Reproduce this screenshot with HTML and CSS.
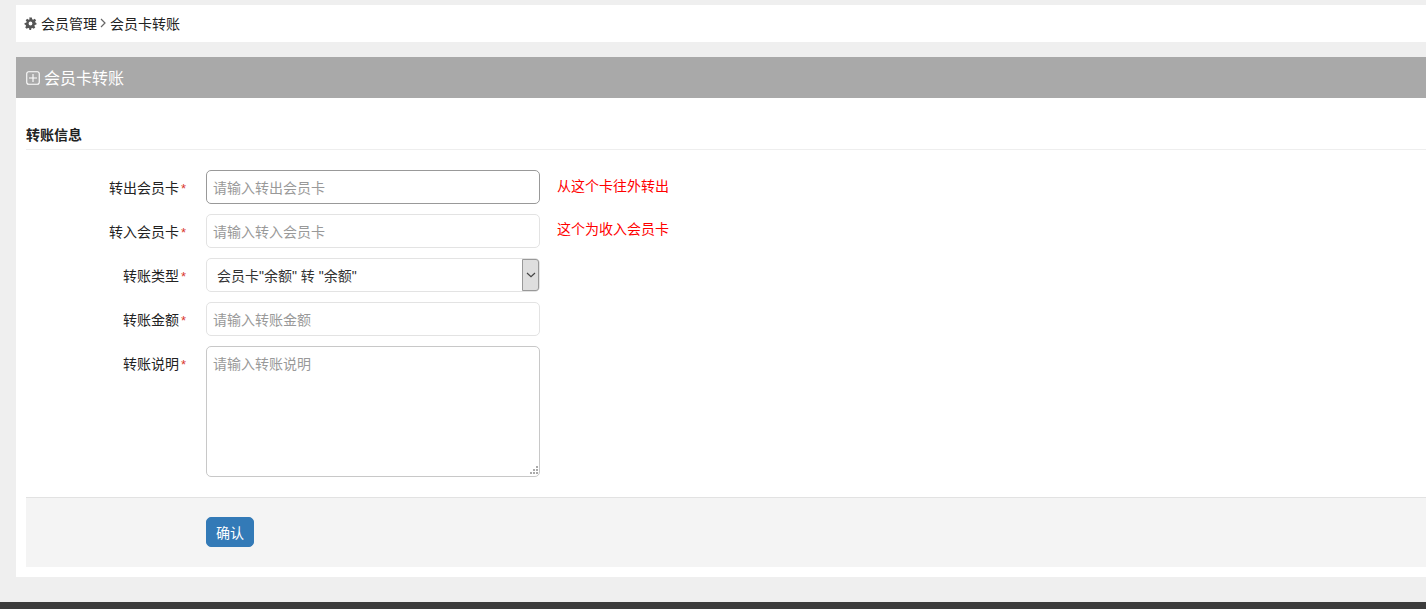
FILE: index.html
```html
<!DOCTYPE html>
<html lang="zh-CN">
<head>
<meta charset="utf-8">
<title>会员卡转账</title>
<link rel="stylesheet" href="styles.css">
</head>
<body>
<main class="content">
  <nav class="crumb">
    <svg class="gear" viewBox="0 0 24 24" width="13" height="13"><path fill="#555" fill-rule="evenodd" d="M9.5 1h5l.6 3.1 1.9.8 2.6-1.8 2.8 2.8-1.8 2.6.8 1.9L23 11v3l-3.1.6-.8 1.9 1.8 2.6-2.8 2.8-2.6-1.8-1.9.8-.6 3.1h-3l-.6-3.1-1.9-.8-2.6 1.8-2.8-2.8 1.8-2.6-.8-1.9L1 14v-3l3.1-.6.8-1.9-1.8-2.6 2.8-2.8 2.6 1.8 1.9-.8zM12 8.5a3.5 3.5 0 1 0 0 7 3.5 3.5 0 0 0 0-7z"/></svg>
    <span>会员管理</span>
    <svg class="chev" viewBox="0 0 6 10" width="6" height="10"><path d="M1 1l4 4-4 4" fill="none" stroke="#666" stroke-width="1.2"/></svg>
    <span>会员卡转账</span>
  </nav>
  <section class="panel">
    <header class="panel-head">
      <svg viewBox="0 0 14 14" width="14" height="14"><rect x=".75" y=".75" width="12.5" height="12.5" rx="2" fill="none" stroke="#fff" stroke-width="1.1"/><path d="M7 3v8M3 7h8" stroke="#fff" stroke-width="1.1"/></svg>
      <h1>会员卡转账</h1>
    </header>
    <div class="panel-body">
      <h2 class="section-title">转账信息</h2>
      <form class="form">
        <div class="row">
          <label class="label">转出会员卡<i>*</i></label>
          <input class="control control-focus" type="text" placeholder="请输入转出会员卡">
          <span class="hint">从这个卡往外转出</span>
        </div>
        <div class="row">
          <label class="label">转入会员卡<i>*</i></label>
          <input class="control" type="text" placeholder="请输入转入会员卡">
          <span class="hint">这个为收入会员卡</span>
        </div>
        <div class="row">
          <label class="label">转账类型<i>*</i></label>
          <div class="field-wrap">
            <select class="control select"><option>会员卡"余额" 转 "余额"</option></select>
            <span class="select-btn"><svg viewBox="0 0 10 6" width="10" height="6"><path d="M1 1l4 3.6L9 1" fill="none" stroke="#444" stroke-width="1.2"/></svg></span>
          </div>
        </div>
        <div class="row">
          <label class="label">转账金额<i>*</i></label>
          <input class="control" type="text" placeholder="请输入转账金额">
        </div>
        <div class="row">
          <label class="label">转账说明<i>*</i></label>
          <div class="field-wrap area-wrap">
            <textarea class="control area" placeholder="请输入转账说明"></textarea>
            <svg class="grip" viewBox="0 0 8 8" width="8" height="8"><path fill="#aaa" d="M6 0h2v2H6zM3 3h2v2H3zM6 3h2v2H6zM0 6h2v2H0zM3 6h2v2H3zM6 6h2v2H6z"/></svg>
          </div>
        </div>
        <div class="actions">
          <button class="btn" type="button">确认</button>
        </div>
      </form>
    </div>
  </section>
</main>
<footer class="foot"></footer>
</body>
</html>
```
FILE: styles.css
```css
* { box-sizing: border-box; }
html, body { margin: 0; height: 609px; overflow: hidden; }
body {
  background: #efefef;
  font-family: "Liberation Sans", "Noto Sans CJK SC", sans-serif;
  font-size: 14px;
  color: #333;
  display: flex;
  flex-direction: column;
}
.content { padding: 5px 0 0 16px; flex: 1; }
.crumb {
  height: 37px;
  background: #fff;
  display: flex;
  align-items: center;
  padding: 0 0 2px 8px;
  gap: 3px;
  color: #222;
}
.gear { flex: none; margin-top: 1px; margin-right: 1px; }
.chev { margin: 0 1px 0 0; }
.panel { margin-top: 15px; background: #fff; }
.panel-head {
  height: 41px;
  background: #a9a9a9;
  display: flex;
  align-items: center;
  gap: 4px;
  padding: 0 0 2px 10px;
  color: #fff;
}
.panel-head svg { margin-top: 2px; }
.panel-head h1 { margin: 0; font-size: 16px; font-weight: 400; }
.panel-body { padding: 28px 0 10px 10px; }
.section-title {
  margin: 0;
  height: 24px;
  font-size: 14px;
  line-height: 18px;
  font-weight: 700;
  color: #222;
  border-bottom: 1px solid #eee;
}
.form { padding-top: 20px; }
.row {
  display: flex;
  align-items: flex-start;
  margin-bottom: 10px;
}
.label {
  width: 160px;
  height: 34px;
  text-align: right;
  line-height: 36px;
  color: #222;
  flex: none;
}
.label i { font-style: normal; color: #d9382e; margin-left: 2px; font-size: 13px; }
.control {
  display: block;
  width: 334px;
  height: 34px;
  margin: 0;
  padding: 2px 6px 0;
  flex: none;
  border: 1px solid #e3e3e3;
  border-radius: 5px;
  background: #fff;
  font: inherit;
  color: #333;
  outline: none;
}
.row > .control { margin-left: 20px; }
.control::placeholder { color: #999; opacity: 1; }
.control-focus { border-color: #999; }
.field-wrap { position: relative; width: 334px; margin-left: 20px; flex: none; }
.select {
  padding-left: 10px;
  appearance: none;
  -webkit-appearance: none;
}
.select-btn {
  position: absolute;
  right: 1px;
  top: 1px;
  width: 17px;
  height: 32px;
  background: #dedede;
  border: 1px solid #999;
  border-radius: 0 3px 3px 0;
  display: flex;
  align-items: center;
  justify-content: center;
}
.area {
  height: 131px;
  padding-top: 7px;
  border-color: #c8c8c8;
  line-height: 20px;
  resize: none;
}
.grip { position: absolute; right: 2px; bottom: 3px; }
.hint {
  color: #f00;
  margin-left: 17px;
  line-height: 33px;
}
.row:nth-child(2) .hint { line-height: 30px; }
.actions {
  margin-top: 20px;
  height: 70px;
  background: #f4f4f4;
  border-top: 1px solid #e2e2e2;
  padding: 19px 0 0 180px;
}
.btn {
  display: block;
  width: 48px;
  height: 30px;
  padding: 0;
  border: 1px solid #337ab7;
  border-radius: 5px;
  background: #337ab7;
  color: #fff;
  font: inherit;
}
.foot { height: 7px; background: #3c3c3c; flex: none; }
```
